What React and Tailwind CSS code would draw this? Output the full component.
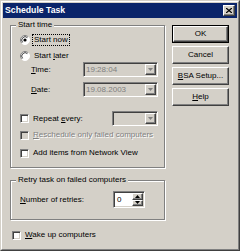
import React from "react";

const sunken =
  "border border-t-[#808080] border-l-[#808080] border-r-white border-b-white shadow-[inset_1px_1px_0_#404040,inset_-1px_-1px_0_#d4d0c8]";
const raised =
  "border border-t-white border-l-white border-r-[#404040] border-b-[#404040] shadow-[inset_-1px_-1px_0_#808080]";

function Arrow({ color = "#000", up = false }) {
  return (
    <svg width="5" height="3" viewBox="0 0 5 3">
      <path d={up ? "M0 3h5L2.5 0z" : "M0 0h5L2.5 3z"} fill={color} />
    </svg>
  );
}

function Radio({ checked }) {
  return (
    <svg width="10" height="10" viewBox="0 0 10 10" className="shrink-0">
      <circle cx="5" cy="5" r="4.5" fill="#fff" />
      <path d="M1.8 8.2A4.5 4.5 0 0 1 8.2 1.8" stroke="#808080" fill="none" />
      <path d="M2.6 7.4A3.4 3.4 0 0 1 7.4 2.6" stroke="#404040" fill="none" />
      <path d="M8.2 1.8A4.5 4.5 0 0 1 1.8 8.2" stroke="#fff" fill="none" />
      {checked && <circle cx="5" cy="5" r="1.6" fill="#000" />}
    </svg>
  );
}

function Check({ disabled }) {
  return (
    <div
      className={`w-[9px] h-[9px] shrink-0 ${disabled ? "bg-[#d4d0c8]" : "bg-white"} ${sunken}`}
    />
  );
}

function Combo({ value, className }) {
  return (
    <div className={`flex h-[15px] p-[1px] bg-[#d4d0c8] ${sunken} ${className}`}>
      <span className="flex-1 flex items-center pl-[1px] text-[#808080]">{value}</span>
      <div className={`w-[11px] flex items-center justify-center bg-[#d4d0c8] ${raised}`}>
        <Arrow color="#808080" />
      </div>
    </div>
  );
}

function Group({ label, className, children }) {
  return (
    <div
      className={`relative w-[155px] border border-[#808080] shadow-[1px_1px_0_#fff,inset_1px_1px_0_#fff] ${className}`}
    >
      <span className="absolute top-[-6px] left-[5px] px-[2px] bg-[#d4d0c8] leading-[10px]">
        {label}
      </span>
      {children}
    </div>
  );
}

function Btn({ children, def }) {
  const face = (
    <div className={`w-full h-full flex items-center justify-center bg-[#d4d0c8] ${raised}`}>
      {children}
    </div>
  );
  return (
    <div className={`w-[57px] h-[18px] ${def ? "border border-black" : ""}`}>{face}</div>
  );
}

const disabledText = "text-[#808080] [text-shadow:1px_1px_0_#fff]";

export default function App() {
  return (
    <div className="w-[240px] h-[251px] border border-t-[#d4d0c8] border-l-[#d4d0c8] border-r-[#404040] border-b-[#404040] bg-[#d4d0c8] text-black text-[8px] leading-none [font-family:'Liberation_Sans',Arial,sans-serif]">
      <div className="w-full h-full p-[1px] border border-t-white border-l-white border-r-[#808080] border-b-[#808080]">
        {/* title bar */}
        <div className="h-[15px] bg-[#0a246a] flex items-center justify-between pl-[2px] pr-[2px]">
          <span className="text-white font-bold text-[8.7px]">Schedule Task</span>
          <div className={`w-[12px] h-[11px] flex items-center justify-center bg-[#d4d0c8] ${raised}`}>
            <svg width="6" height="5" viewBox="0 0 6 5">
              <path d="M0 0l6 5M6 0L0 5" stroke="#000" strokeWidth="1.3" />
            </svg>
          </div>
        </div>

        <div className="flex pl-[7px] pt-[7px]">
          {/* left column */}
          <div className="w-[156px] flex flex-col">
            <Group label="Start time" className="h-[143px]">
              <div className="flex flex-col pt-[8px] pl-[9px]">
                <div className="h-[12px] flex items-center">
                  <Radio checked />
                  <span className="ml-[2px] px-[1px] h-[12px] flex items-center border border-dotted border-black">
                    Start now
                  </span>
                </div>
                <div className="h-[12px] mt-[4px] flex items-center">
                  <Radio />
                  <span className="ml-[4px]">
                    Start <u>l</u>ater
                  </span>
                </div>
                <div className="h-[15px] flex items-center">
                  <span className="w-[63px] pl-[11px]">
                    <u>T</u>ime:
                  </span>
                  <Combo value="19:28:04" className="w-[75px]" />
                </div>
                <div className="h-[15px] mt-[5px] flex items-center">
                  <span className="w-[63px] pl-[11px]">
                    <u>D</u>ate:
                  </span>
                  <Combo value="19.08.2003" className="w-[75px]" />
                </div>
                <div className="h-[15px] mt-[14px] flex items-center">
                  <Check />
                  <span className="ml-[4px] w-[79px]">
                    Repeat <u>e</u>very:
                  </span>
                  <Combo value="" className="w-[46px]" />
                </div>
                <div className="h-[12px] mt-[3px] flex items-center">
                  <Check disabled />
                  <span className={`ml-[4px] ${disabledText}`}>
                    <u>R</u>eschedule only failed computers
                  </span>
                </div>
                <div className="h-[12px] mt-[6px] flex items-center">
                  <Check />
                  <span className="ml-[4px]">Add items from Network View</span>
                </div>
              </div>
            </Group>

            <Group label="Retry task on failed computers" className="h-[40px] mt-[12px]">
              <div className="flex items-center pt-[10px] pl-[9px]">
                <span className="w-[93px]">
                  <u>N</u>umber of retries:
                </span>
                <div className={`flex w-[32px] h-[17px] p-[1px] bg-white ${sunken}`}>
                  <span className="flex-1 flex items-center pl-[2px]">0</span>
                  <div className="w-[11px] flex flex-col">
                    <div className={`flex-1 flex items-center justify-center bg-[#d4d0c8] ${raised}`}>
                      <Arrow up />
                    </div>
                    <div className={`flex-1 flex items-center justify-center bg-[#d4d0c8] ${raised}`}>
                      <Arrow />
                    </div>
                  </div>
                </div>
              </div>
            </Group>

            <div className="h-[12px] mt-[9px] flex items-center pl-[2px]">
              <Check />
              <span className="ml-[4px]">
                <u>W</u>ake up computers
              </span>
            </div>
          </div>

          {/* buttons */}
          <div className="ml-[6px] flex flex-col gap-[3px]">
            <Btn def>OK</Btn>
            <Btn>Cancel</Btn>
            <Btn>
              <span>
                <u>B</u>SA Setup...
              </span>
            </Btn>
            <Btn>
              <span>
                <u>H</u>elp
              </span>
            </Btn>
          </div>
        </div>
      </div>
    </div>
  );
}
